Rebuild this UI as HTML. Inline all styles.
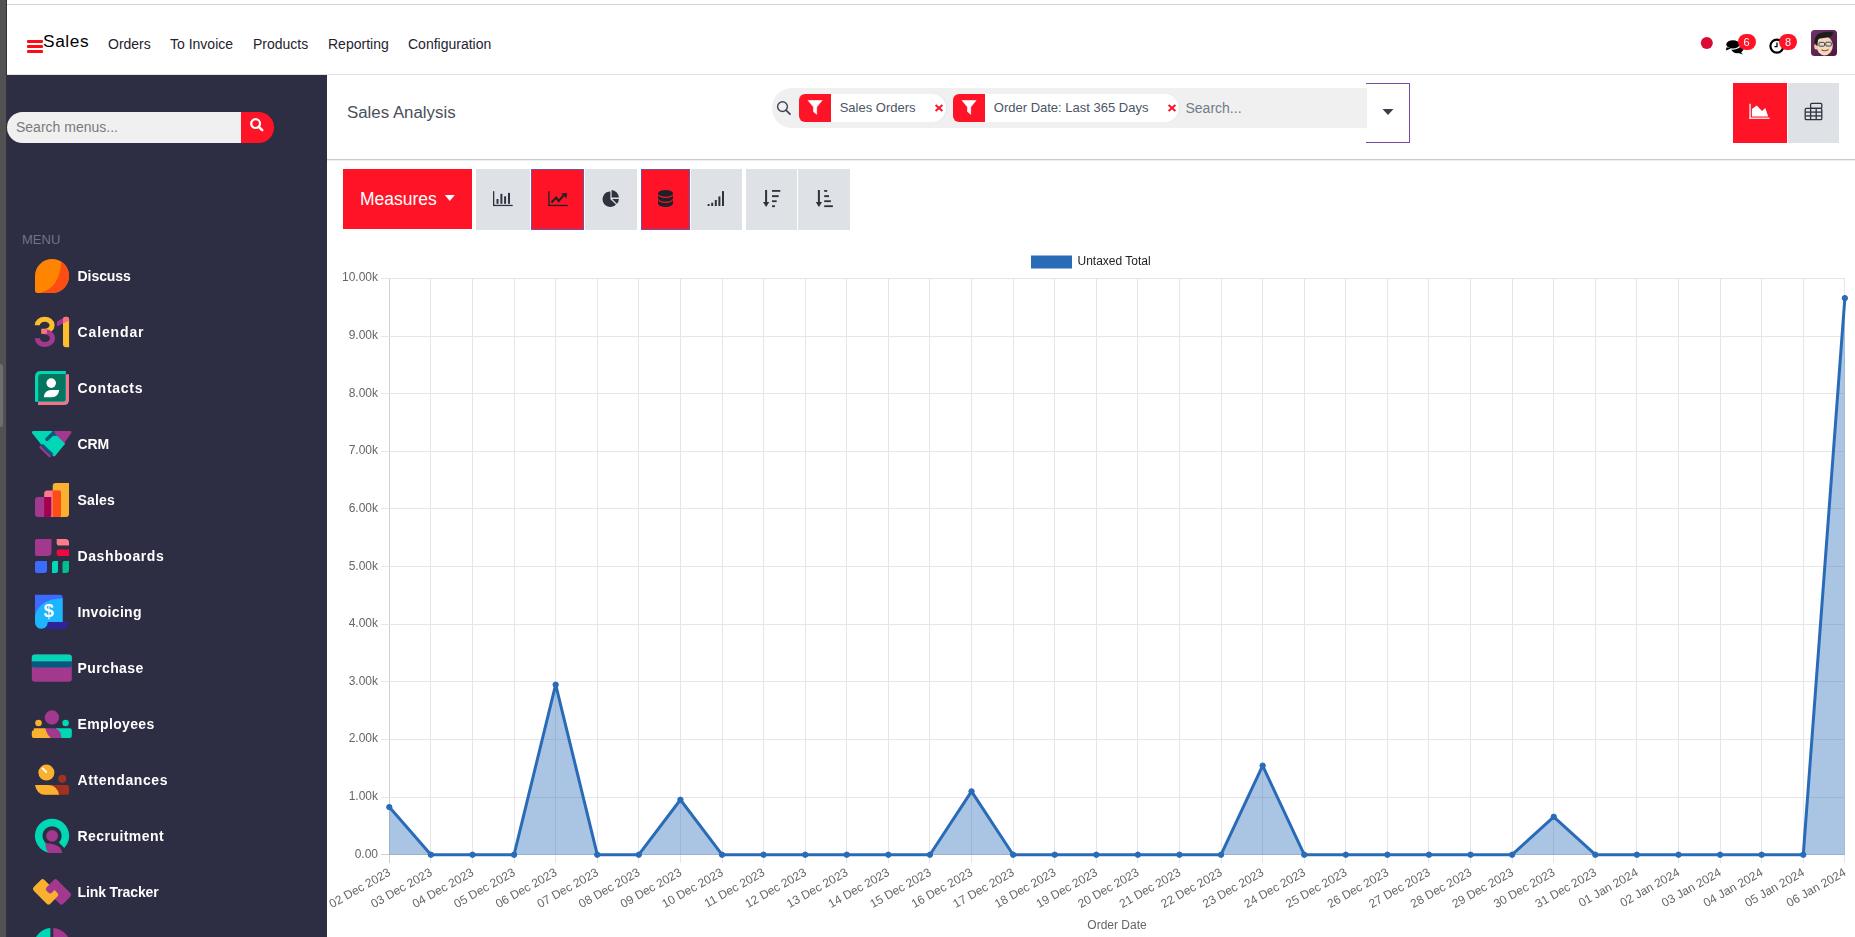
<!DOCTYPE html>
<html><head><meta charset="utf-8"><title>Sales Analysis</title>
<style>
*{box-sizing:border-box}
html,body{margin:0;padding:0;width:1855px;height:937px;overflow:hidden;background:#fff;font-family:"Liberation Sans",sans-serif;}
.a{position:absolute}
.chart{position:absolute;left:0;top:0;will-change:transform}
.nav a{position:absolute;top:35.6px;font-size:14px;color:#1f2330;text-decoration:none;line-height:16px;white-space:nowrap}
.a{white-space:nowrap}
.menu .it{position:absolute;left:77.5px;font-size:14px;font-weight:bold;color:#fff;line-height:16px}
.menu svg{position:absolute}
.btn{position:absolute;top:169px;height:61px;background:#dee1e6}
.btn.on{background:#fe1426;border:1px solid #6f54a3}
.btn svg{position:absolute;left:50%;top:50%;transform:translate(-50%,-50%)}
</style></head><body>
<!-- left strip -->
<div class="a" style="left:0;top:0;width:6px;height:937px;background:#525252"></div>
<div class="a" style="left:6px;top:0;width:1px;height:937px;background:#333"></div>
<div class="a" style="left:0;top:364px;width:3px;height:63px;background:#6e6e6e;border-radius:0 3px 3px 0"></div>
<div class="a" style="left:7px;top:4px;width:1848px;height:1px;background:#d0d4d4"></div>
<!-- navbar -->
<div class="a" style="left:7px;top:74px;width:1848px;height:1px;background:#dde3e6"></div>
<div class="a nav" style="left:0;top:0">
 <div class="a" style="left:27px;top:40px;width:16px;height:2.6px;background:#ff0a16;border-radius:1px"></div>
 <div class="a" style="left:27px;top:45.2px;width:16px;height:2.6px;background:#ff0a16;border-radius:1px"></div>
 <div class="a" style="left:27px;top:50.4px;width:16px;height:2.6px;background:#ff0a16;border-radius:1px"></div>
 <div class="a" style="left:43px;top:31px;font-size:17.3px;letter-spacing:0.6px;color:#000;line-height:20px">Sales</div>
 <a style="left:108px">Orders</a>
 <a style="left:170px">To Invoice</a>
 <a style="left:253px">Products</a>
 <a style="left:328px">Reporting</a>
 <a style="left:408px">Configuration</a>
</div>
<!-- sidebar -->
<div class="a" style="left:7px;top:75px;width:320px;height:862px;background:#2d2d43"></div>
<div class="a" style="left:7px;top:112px;width:234px;height:31px;background:#f0f0f0;border-radius:16px 0 0 16px"></div>
<div class="a" style="left:16px;top:119px;font-size:14px;color:#7a7a7a;line-height:16px">Search menus...</div>
<div class="a" style="left:241px;top:112px;width:33px;height:31px;background:#fe1426;border-radius:0 16px 16px 0"></div>
<div class="a" style="left:22px;top:232px;font-size:13px;color:#71718b;line-height:15px">MENU</div>
<!-- control panel -->
<div class="a" style="left:327px;top:159px;width:1528px;height:1px;background:#c9cacc"></div>
<div class="a" style="left:327px;top:160px;width:1528px;height:1px;background:#eceef2"></div>
<div class="a" style="left:347px;top:102.6px;font-size:16.85px;color:#4a4f5a;line-height:19px">Sales Analysis</div>
<div class="a" style="left:772px;top:88px;width:595px;height:40px;background:#f0f0f0;border-radius:20px 0 0 20px"></div>

<div class="a" style="left:799px;top:94px;width:147px;height:28px;background:#fff;border-radius:6px 14px 14px 6px;box-shadow:1px 0 0 #e3e6ea"></div>
<div class="a" style="left:799px;top:94px;width:32px;height:28px;background:#fe1426;border-radius:6px 0 0 6px"></div>
<div class="a" style="left:839.7px;top:100px;font-size:13px;color:#4c5566;line-height:15px">Sales Orders</div>
<div class="a" style="left:953px;top:94px;width:226px;height:28px;background:#fff;border-radius:6px 14px 14px 6px;box-shadow:1px 0 0 #e3e6ea"></div>
<div class="a" style="left:953px;top:94px;width:32px;height:28px;background:#fe1426;border-radius:6px 0 0 6px"></div>
<div class="a" style="left:993.8px;top:100px;font-size:13px;color:#4c5566;line-height:15px">Order Date: Last 365 Days</div>
<div class="a" style="left:1185.5px;top:99.5px;font-size:14px;color:#6f7b8b;line-height:16px">Search...</div>
<div class="a" style="left:1366px;top:83px;width:44px;height:60px;border:1px solid #714ca3;border-left:none"></div>
<div class="a" style="left:1733px;top:83px;width:54px;height:60px;background:#fe1426"></div>
<div class="a" style="left:1788px;top:83px;width:51px;height:60px;background:#dee1e6"></div>
<!-- buttons -->
<div class="a" style="left:343px;top:169px;width:129px;height:60px;background:#fe1426"></div>
<div class="a" style="left:360px;top:188.8px;font-size:17.5px;color:#fff;line-height:20px">Measures</div>
<div class="btn" style="left:476px;width:54px"></div>
<div class="btn on" style="left:531px;width:53px"></div>
<div class="btn" style="left:585px;width:52px"></div>
<div class="btn on" style="left:641px;width:49px"></div>
<div class="btn" style="left:691px;width:51px"></div>
<div class="btn" style="left:746px;width:51px"></div>
<div class="btn" style="left:798px;width:52px"></div>
<svg class="chart" width="1855" height="937" viewBox="0 0 1855 937" font-family="Liberation Sans, sans-serif"><line x1="389.5" y1="278.0" x2="389.5" y2="863.0" stroke="#cfcfcf" stroke-width="1"/><line x1="430.5" y1="278.0" x2="430.5" y2="863.0" stroke="#e6e6e6" stroke-width="1"/><line x1="472.5" y1="278.0" x2="472.5" y2="863.0" stroke="#e6e6e6" stroke-width="1"/><line x1="514.5" y1="278.0" x2="514.5" y2="863.0" stroke="#e6e6e6" stroke-width="1"/><line x1="555.5" y1="278.0" x2="555.5" y2="863.0" stroke="#e6e6e6" stroke-width="1"/><line x1="597.5" y1="278.0" x2="597.5" y2="863.0" stroke="#e6e6e6" stroke-width="1"/><line x1="638.5" y1="278.0" x2="638.5" y2="863.0" stroke="#e6e6e6" stroke-width="1"/><line x1="680.5" y1="278.0" x2="680.5" y2="863.0" stroke="#e6e6e6" stroke-width="1"/><line x1="722.5" y1="278.0" x2="722.5" y2="863.0" stroke="#e6e6e6" stroke-width="1"/><line x1="763.5" y1="278.0" x2="763.5" y2="863.0" stroke="#e6e6e6" stroke-width="1"/><line x1="805.5" y1="278.0" x2="805.5" y2="863.0" stroke="#e6e6e6" stroke-width="1"/><line x1="846.5" y1="278.0" x2="846.5" y2="863.0" stroke="#e6e6e6" stroke-width="1"/><line x1="888.5" y1="278.0" x2="888.5" y2="863.0" stroke="#e6e6e6" stroke-width="1"/><line x1="929.5" y1="278.0" x2="929.5" y2="863.0" stroke="#e6e6e6" stroke-width="1"/><line x1="971.5" y1="278.0" x2="971.5" y2="863.0" stroke="#e6e6e6" stroke-width="1"/><line x1="1013.5" y1="278.0" x2="1013.5" y2="863.0" stroke="#e6e6e6" stroke-width="1"/><line x1="1054.5" y1="278.0" x2="1054.5" y2="863.0" stroke="#e6e6e6" stroke-width="1"/><line x1="1096.5" y1="278.0" x2="1096.5" y2="863.0" stroke="#e6e6e6" stroke-width="1"/><line x1="1137.5" y1="278.0" x2="1137.5" y2="863.0" stroke="#e6e6e6" stroke-width="1"/><line x1="1179.5" y1="278.0" x2="1179.5" y2="863.0" stroke="#e6e6e6" stroke-width="1"/><line x1="1221.5" y1="278.0" x2="1221.5" y2="863.0" stroke="#e6e6e6" stroke-width="1"/><line x1="1262.5" y1="278.0" x2="1262.5" y2="863.0" stroke="#e6e6e6" stroke-width="1"/><line x1="1304.5" y1="278.0" x2="1304.5" y2="863.0" stroke="#e6e6e6" stroke-width="1"/><line x1="1345.5" y1="278.0" x2="1345.5" y2="863.0" stroke="#e6e6e6" stroke-width="1"/><line x1="1387.5" y1="278.0" x2="1387.5" y2="863.0" stroke="#e6e6e6" stroke-width="1"/><line x1="1428.5" y1="278.0" x2="1428.5" y2="863.0" stroke="#e6e6e6" stroke-width="1"/><line x1="1470.5" y1="278.0" x2="1470.5" y2="863.0" stroke="#e6e6e6" stroke-width="1"/><line x1="1512.5" y1="278.0" x2="1512.5" y2="863.0" stroke="#e6e6e6" stroke-width="1"/><line x1="1553.5" y1="278.0" x2="1553.5" y2="863.0" stroke="#e6e6e6" stroke-width="1"/><line x1="1595.5" y1="278.0" x2="1595.5" y2="863.0" stroke="#e6e6e6" stroke-width="1"/><line x1="1636.5" y1="278.0" x2="1636.5" y2="863.0" stroke="#e6e6e6" stroke-width="1"/><line x1="1678.5" y1="278.0" x2="1678.5" y2="863.0" stroke="#e6e6e6" stroke-width="1"/><line x1="1720.5" y1="278.0" x2="1720.5" y2="863.0" stroke="#e6e6e6" stroke-width="1"/><line x1="1761.5" y1="278.0" x2="1761.5" y2="863.0" stroke="#e6e6e6" stroke-width="1"/><line x1="1803.5" y1="278.0" x2="1803.5" y2="863.0" stroke="#e6e6e6" stroke-width="1"/><line x1="1844.5" y1="278.0" x2="1844.5" y2="863.0" stroke="#e6e6e6" stroke-width="1"/><line x1="381.0" y1="854.5" x2="1845.0" y2="854.5" stroke="#cfcfcf" stroke-width="1"/><line x1="381.0" y1="797.5" x2="1845.0" y2="797.5" stroke="#e6e6e6" stroke-width="1"/><line x1="381.0" y1="739.5" x2="1845.0" y2="739.5" stroke="#e6e6e6" stroke-width="1"/><line x1="381.0" y1="681.5" x2="1845.0" y2="681.5" stroke="#e6e6e6" stroke-width="1"/><line x1="381.0" y1="624.5" x2="1845.0" y2="624.5" stroke="#e6e6e6" stroke-width="1"/><line x1="381.0" y1="566.5" x2="1845.0" y2="566.5" stroke="#e6e6e6" stroke-width="1"/><line x1="381.0" y1="508.5" x2="1845.0" y2="508.5" stroke="#e6e6e6" stroke-width="1"/><line x1="381.0" y1="451.5" x2="1845.0" y2="451.5" stroke="#e6e6e6" stroke-width="1"/><line x1="381.0" y1="393.5" x2="1845.0" y2="393.5" stroke="#e6e6e6" stroke-width="1"/><line x1="381.0" y1="336.5" x2="1845.0" y2="336.5" stroke="#e6e6e6" stroke-width="1"/><line x1="381.0" y1="278.5" x2="1845.0" y2="278.5" stroke="#e6e6e6" stroke-width="1"/><path d="M389.31,854.7 L389.31,807.10 L430.90,854.70 L472.48,854.70 L514.07,854.70 L555.66,684.69 L597.25,854.70 L638.83,854.70 L680.42,799.78 L722.01,854.70 L763.59,854.70 L805.18,854.70 L846.77,854.70 L888.35,854.70 L929.94,854.70 L971.53,791.36 L1013.12,854.70 L1054.70,854.70 L1096.29,854.70 L1137.88,854.70 L1179.46,854.70 L1221.05,854.70 L1262.64,765.66 L1304.22,854.70 L1345.81,854.70 L1387.40,854.70 L1428.99,854.70 L1470.57,854.70 L1512.16,854.70 L1553.75,816.78 L1595.33,854.70 L1636.92,854.70 L1678.51,854.70 L1720.09,854.70 L1761.68,854.70 L1803.27,854.70 L1844.86,298.11 L1844.86,854.7 Z" fill="rgba(42,107,184,0.4)"/><polyline points="389.31,807.10 430.90,854.70 472.48,854.70 514.07,854.70 555.66,684.69 597.25,854.70 638.83,854.70 680.42,799.78 722.01,854.70 763.59,854.70 805.18,854.70 846.77,854.70 888.35,854.70 929.94,854.70 971.53,791.36 1013.12,854.70 1054.70,854.70 1096.29,854.70 1137.88,854.70 1179.46,854.70 1221.05,854.70 1262.64,765.66 1304.22,854.70 1345.81,854.70 1387.40,854.70 1428.99,854.70 1470.57,854.70 1512.16,854.70 1553.75,816.78 1595.33,854.70 1636.92,854.70 1678.51,854.70 1720.09,854.70 1761.68,854.70 1803.27,854.70 1844.86,298.11" fill="none" stroke="#2a6bb8" stroke-width="3" stroke-linejoin="round"/><circle cx="389.31" cy="807.10" r="2.7" fill="#2a6bb8" stroke="#2a6bb8" stroke-width="1"/><circle cx="430.90" cy="854.70" r="2.7" fill="#2a6bb8" stroke="#2a6bb8" stroke-width="1"/><circle cx="472.48" cy="854.70" r="2.7" fill="#2a6bb8" stroke="#2a6bb8" stroke-width="1"/><circle cx="514.07" cy="854.70" r="2.7" fill="#2a6bb8" stroke="#2a6bb8" stroke-width="1"/><circle cx="555.66" cy="684.69" r="2.7" fill="#2a6bb8" stroke="#2a6bb8" stroke-width="1"/><circle cx="597.25" cy="854.70" r="2.7" fill="#2a6bb8" stroke="#2a6bb8" stroke-width="1"/><circle cx="638.83" cy="854.70" r="2.7" fill="#2a6bb8" stroke="#2a6bb8" stroke-width="1"/><circle cx="680.42" cy="799.78" r="2.7" fill="#2a6bb8" stroke="#2a6bb8" stroke-width="1"/><circle cx="722.01" cy="854.70" r="2.7" fill="#2a6bb8" stroke="#2a6bb8" stroke-width="1"/><circle cx="763.59" cy="854.70" r="2.7" fill="#2a6bb8" stroke="#2a6bb8" stroke-width="1"/><circle cx="805.18" cy="854.70" r="2.7" fill="#2a6bb8" stroke="#2a6bb8" stroke-width="1"/><circle cx="846.77" cy="854.70" r="2.7" fill="#2a6bb8" stroke="#2a6bb8" stroke-width="1"/><circle cx="888.35" cy="854.70" r="2.7" fill="#2a6bb8" stroke="#2a6bb8" stroke-width="1"/><circle cx="929.94" cy="854.70" r="2.7" fill="#2a6bb8" stroke="#2a6bb8" stroke-width="1"/><circle cx="971.53" cy="791.36" r="2.7" fill="#2a6bb8" stroke="#2a6bb8" stroke-width="1"/><circle cx="1013.12" cy="854.70" r="2.7" fill="#2a6bb8" stroke="#2a6bb8" stroke-width="1"/><circle cx="1054.70" cy="854.70" r="2.7" fill="#2a6bb8" stroke="#2a6bb8" stroke-width="1"/><circle cx="1096.29" cy="854.70" r="2.7" fill="#2a6bb8" stroke="#2a6bb8" stroke-width="1"/><circle cx="1137.88" cy="854.70" r="2.7" fill="#2a6bb8" stroke="#2a6bb8" stroke-width="1"/><circle cx="1179.46" cy="854.70" r="2.7" fill="#2a6bb8" stroke="#2a6bb8" stroke-width="1"/><circle cx="1221.05" cy="854.70" r="2.7" fill="#2a6bb8" stroke="#2a6bb8" stroke-width="1"/><circle cx="1262.64" cy="765.66" r="2.7" fill="#2a6bb8" stroke="#2a6bb8" stroke-width="1"/><circle cx="1304.22" cy="854.70" r="2.7" fill="#2a6bb8" stroke="#2a6bb8" stroke-width="1"/><circle cx="1345.81" cy="854.70" r="2.7" fill="#2a6bb8" stroke="#2a6bb8" stroke-width="1"/><circle cx="1387.40" cy="854.70" r="2.7" fill="#2a6bb8" stroke="#2a6bb8" stroke-width="1"/><circle cx="1428.99" cy="854.70" r="2.7" fill="#2a6bb8" stroke="#2a6bb8" stroke-width="1"/><circle cx="1470.57" cy="854.70" r="2.7" fill="#2a6bb8" stroke="#2a6bb8" stroke-width="1"/><circle cx="1512.16" cy="854.70" r="2.7" fill="#2a6bb8" stroke="#2a6bb8" stroke-width="1"/><circle cx="1553.75" cy="816.78" r="2.7" fill="#2a6bb8" stroke="#2a6bb8" stroke-width="1"/><circle cx="1595.33" cy="854.70" r="2.7" fill="#2a6bb8" stroke="#2a6bb8" stroke-width="1"/><circle cx="1636.92" cy="854.70" r="2.7" fill="#2a6bb8" stroke="#2a6bb8" stroke-width="1"/><circle cx="1678.51" cy="854.70" r="2.7" fill="#2a6bb8" stroke="#2a6bb8" stroke-width="1"/><circle cx="1720.09" cy="854.70" r="2.7" fill="#2a6bb8" stroke="#2a6bb8" stroke-width="1"/><circle cx="1761.68" cy="854.70" r="2.7" fill="#2a6bb8" stroke="#2a6bb8" stroke-width="1"/><circle cx="1803.27" cy="854.70" r="2.7" fill="#2a6bb8" stroke="#2a6bb8" stroke-width="1"/><circle cx="1844.86" cy="298.11" r="2.7" fill="#2a6bb8" stroke="#2a6bb8" stroke-width="1"/><text x="378" y="854.70" dy="3.0" text-anchor="end" font-size="12" fill="#666">0.00</text><text x="378" y="797.07" dy="3.0" text-anchor="end" font-size="12" fill="#666">1.00k</text><text x="378" y="739.44" dy="3.0" text-anchor="end" font-size="12" fill="#666">2.00k</text><text x="378" y="681.81" dy="3.0" text-anchor="end" font-size="12" fill="#666">3.00k</text><text x="378" y="624.18" dy="3.0" text-anchor="end" font-size="12" fill="#666">4.00k</text><text x="378" y="566.55" dy="3.0" text-anchor="end" font-size="12" fill="#666">5.00k</text><text x="378" y="508.92" dy="3.0" text-anchor="end" font-size="12" fill="#666">6.00k</text><text x="378" y="451.29" dy="3.0" text-anchor="end" font-size="12" fill="#666">7.00k</text><text x="378" y="393.66" dy="3.0" text-anchor="end" font-size="12" fill="#666">8.00k</text><text x="378" y="336.03" dy="3.0" text-anchor="end" font-size="12" fill="#666">9.00k</text><text x="378" y="278.40" dy="3.0" text-anchor="end" font-size="12" fill="#666">10.00k</text><text transform="translate(385.78,864.90) rotate(-29.4)" x="0" y="7.2" dy="4.2" text-anchor="end" font-size="12" fill="#666">02 Dec 2023</text><text transform="translate(427.36,864.90) rotate(-29.4)" x="0" y="7.2" dy="4.2" text-anchor="end" font-size="12" fill="#666">03 Dec 2023</text><text transform="translate(468.95,864.90) rotate(-29.4)" x="0" y="7.2" dy="4.2" text-anchor="end" font-size="12" fill="#666">04 Dec 2023</text><text transform="translate(510.54,864.90) rotate(-29.4)" x="0" y="7.2" dy="4.2" text-anchor="end" font-size="12" fill="#666">05 Dec 2023</text><text transform="translate(552.12,864.90) rotate(-29.4)" x="0" y="7.2" dy="4.2" text-anchor="end" font-size="12" fill="#666">06 Dec 2023</text><text transform="translate(593.71,864.90) rotate(-29.4)" x="0" y="7.2" dy="4.2" text-anchor="end" font-size="12" fill="#666">07 Dec 2023</text><text transform="translate(635.30,864.90) rotate(-29.4)" x="0" y="7.2" dy="4.2" text-anchor="end" font-size="12" fill="#666">08 Dec 2023</text><text transform="translate(676.88,864.90) rotate(-29.4)" x="0" y="7.2" dy="4.2" text-anchor="end" font-size="12" fill="#666">09 Dec 2023</text><text transform="translate(718.47,864.90) rotate(-29.4)" x="0" y="7.2" dy="4.2" text-anchor="end" font-size="12" fill="#666">10 Dec 2023</text><text transform="translate(760.06,864.90) rotate(-29.4)" x="0" y="7.2" dy="4.2" text-anchor="end" font-size="12" fill="#666">11 Dec 2023</text><text transform="translate(801.65,864.90) rotate(-29.4)" x="0" y="7.2" dy="4.2" text-anchor="end" font-size="12" fill="#666">12 Dec 2023</text><text transform="translate(843.23,864.90) rotate(-29.4)" x="0" y="7.2" dy="4.2" text-anchor="end" font-size="12" fill="#666">13 Dec 2023</text><text transform="translate(884.82,864.90) rotate(-29.4)" x="0" y="7.2" dy="4.2" text-anchor="end" font-size="12" fill="#666">14 Dec 2023</text><text transform="translate(926.41,864.90) rotate(-29.4)" x="0" y="7.2" dy="4.2" text-anchor="end" font-size="12" fill="#666">15 Dec 2023</text><text transform="translate(967.99,864.90) rotate(-29.4)" x="0" y="7.2" dy="4.2" text-anchor="end" font-size="12" fill="#666">16 Dec 2023</text><text transform="translate(1009.58,864.90) rotate(-29.4)" x="0" y="7.2" dy="4.2" text-anchor="end" font-size="12" fill="#666">17 Dec 2023</text><text transform="translate(1051.17,864.90) rotate(-29.4)" x="0" y="7.2" dy="4.2" text-anchor="end" font-size="12" fill="#666">18 Dec 2023</text><text transform="translate(1092.75,864.90) rotate(-29.4)" x="0" y="7.2" dy="4.2" text-anchor="end" font-size="12" fill="#666">19 Dec 2023</text><text transform="translate(1134.34,864.90) rotate(-29.4)" x="0" y="7.2" dy="4.2" text-anchor="end" font-size="12" fill="#666">20 Dec 2023</text><text transform="translate(1175.93,864.90) rotate(-29.4)" x="0" y="7.2" dy="4.2" text-anchor="end" font-size="12" fill="#666">21 Dec 2023</text><text transform="translate(1217.52,864.90) rotate(-29.4)" x="0" y="7.2" dy="4.2" text-anchor="end" font-size="12" fill="#666">22 Dec 2023</text><text transform="translate(1259.10,864.90) rotate(-29.4)" x="0" y="7.2" dy="4.2" text-anchor="end" font-size="12" fill="#666">23 Dec 2023</text><text transform="translate(1300.69,864.90) rotate(-29.4)" x="0" y="7.2" dy="4.2" text-anchor="end" font-size="12" fill="#666">24 Dec 2023</text><text transform="translate(1342.28,864.90) rotate(-29.4)" x="0" y="7.2" dy="4.2" text-anchor="end" font-size="12" fill="#666">25 Dec 2023</text><text transform="translate(1383.86,864.90) rotate(-29.4)" x="0" y="7.2" dy="4.2" text-anchor="end" font-size="12" fill="#666">26 Dec 2023</text><text transform="translate(1425.45,864.90) rotate(-29.4)" x="0" y="7.2" dy="4.2" text-anchor="end" font-size="12" fill="#666">27 Dec 2023</text><text transform="translate(1467.04,864.90) rotate(-29.4)" x="0" y="7.2" dy="4.2" text-anchor="end" font-size="12" fill="#666">28 Dec 2023</text><text transform="translate(1508.62,864.90) rotate(-29.4)" x="0" y="7.2" dy="4.2" text-anchor="end" font-size="12" fill="#666">29 Dec 2023</text><text transform="translate(1550.21,864.90) rotate(-29.4)" x="0" y="7.2" dy="4.2" text-anchor="end" font-size="12" fill="#666">30 Dec 2023</text><text transform="translate(1591.80,864.90) rotate(-29.4)" x="0" y="7.2" dy="4.2" text-anchor="end" font-size="12" fill="#666">31 Dec 2023</text><text transform="translate(1633.39,864.90) rotate(-29.4)" x="0" y="7.2" dy="4.2" text-anchor="end" font-size="12" fill="#666">01 Jan 2024</text><text transform="translate(1674.97,864.90) rotate(-29.4)" x="0" y="7.2" dy="4.2" text-anchor="end" font-size="12" fill="#666">02 Jan 2024</text><text transform="translate(1716.56,864.90) rotate(-29.4)" x="0" y="7.2" dy="4.2" text-anchor="end" font-size="12" fill="#666">03 Jan 2024</text><text transform="translate(1758.15,864.90) rotate(-29.4)" x="0" y="7.2" dy="4.2" text-anchor="end" font-size="12" fill="#666">04 Jan 2024</text><text transform="translate(1799.73,864.90) rotate(-29.4)" x="0" y="7.2" dy="4.2" text-anchor="end" font-size="12" fill="#666">05 Jan 2024</text><text transform="translate(1841.32,864.90) rotate(-29.4)" x="0" y="7.2" dy="4.2" text-anchor="end" font-size="12" fill="#666">06 Jan 2024</text><text x="1117" y="928.8" text-anchor="middle" font-size="12" fill="#666">Order Date</text><rect x="1031.5" y="256" width="40" height="12" fill="#2a6bb8" stroke="#2a6bb8" stroke-width="1"/><text x="1077.5" y="264.8" font-size="12" fill="#222">Untaxed Total</text></svg>
<div class="menu"><svg class="a" style="left:0;top:0" width="327" height="937" viewBox="0 0 327 937"><g transform="translate(35,259)"><path d="M0,17 A17,17 0 0 1 34,17 A17,17 0 0 1 17,34 L2.5,34 Q0,34 0,31.5 Z" fill="#ff8400"/><path d="M26.2,2.6 A17,17 0 0 1 17,34 L5,34 Q25,29 26.2,2.6 Z" fill="#fc4d14"/></g><g transform="translate(35,315)"><path d="M2.3,10.25 A7.4,5.95 0 1 1 9.7,16.2 L6.45,16.2" fill="none" stroke="#fcbe2d" stroke-width="5.1"/><path d="M9.5,16.85 L9.9,16.85 A7.6,6.35 0 1 1 2.3,23.25" fill="none" stroke="#a2398f" stroke-width="5.1"/><path d="M8.5,14.3 L12.5,14.3 Q11,16.5 12.2,18.8 L8.5,18.8 Q6.45,18.8 6.45,16.55 Q6.45,14.3 8.5,14.3 Z" fill="#ff6e87"/><path d="M28,4.7 Q28,1.7 31,1.7 Q34.1,1.7 34.1,4.7 L34.1,32.2 L31,32.2 Q28,32.2 28,29.2 Z" fill="#fcbe2d"/><path d="M28,4.7 Q28,1.7 31,1.7 Q34.1,1.7 34.1,4.7 L34.1,5.8 L28,8.5 Z" fill="#ff6e87"/><path d="M22.9,6 L28,3.1 L28,8.45 L22.9,11.1 Q21.6,11.6 21.8,9.6 L22,7.2 Q22.1,6.4 22.9,6 Z" fill="#a2398f"/></g><g transform="translate(35,371)"><path d="M3,3.2 L34,3.2 L34,29 Q34,34 29,34 L3,34 Z" fill="#f5728a"/><path d="M0,5.6 Q0,-0.1 5.6,-0.1 L30.85,-0.1 L30.85,30.7 L0,30.7 Z" fill="#00d7b5"/><path d="M3.2,6.2 Q3.2,3.1 6.3,3.1 L30.6,3.1 L30.6,28.2 Q30.6,30.45 28.3,30.45 L3.2,30.45 Z" fill="#04755f"/><circle cx="16.2" cy="12.1" r="4.8" fill="#fff"/><path d="M8.8,26.3 Q9.4,19.3 16,19.1 L24.1,19.1 Q23.4,26.3 17,26.3 Z" fill="#fff"/></g><g transform="translate(35,427)"><path d="M-1,4 L35,4 Q37.5,4 36,6.5 L20.5,28.5 Q18.7,30.8 16.8,28.5 L-2.5,6.5 Q-4,4 -1,4 Z" fill="#a2398f"/><path d="M-1,4 L17.1,4 L30.2,16.8 L21,27.8 Q19.4,30 17.6,28.2 L6.3,17.8 L-2.5,6.5 Q-4,4 -1,4 Z" fill="#00d7b5"/><path d="M5.2,18.2 L16.2,29.2 Q15,31 13.4,29.6 L4.2,20.5 Z" fill="#a2398f"/><line x1="7.6" y1="18.6" x2="16.6" y2="27.2" stroke="#065a7d" stroke-width="3" stroke-linecap="round"/><line x1="12" y1="12.2" x2="18.4" y2="6" stroke="#065a7d" stroke-width="3.6" stroke-linecap="round"/><path d="M17.1,4 L22.2,9 L18.5,9 Z" fill="#065a7d"/></g><g transform="translate(35,483)"><path d="M17.7,3 Q17.7,0 20.7,0 L34,0 L34,31 Q34,34 31,34 L17.7,34 Z" fill="#fbb130"/><path d="M9.2,10.5 Q9.2,7.5 12.2,7.5 L26,7.5 L26,34 L9.2,34 Z" fill="#ff7a8a"/><path d="M17.7,7.5 L24,7.5 Q26,7.5 26,9.5 L26,32 Q26,34 24,34 L17.7,34 Z" fill="#fc4d14"/><path d="M0,17 Q0,14 3,14 L16.2,14 L16.2,34 L3,34 Q0,34 0,31 Z" fill="#a2398f"/><path d="M9.2,14 L16.2,14 L16.2,32 Q16.2,34 14.2,34 L9.2,34 Z" fill="#a3004f"/></g><g transform="translate(35,539)"><path d="M0,2 Q0,0 2,0 L16.5,0 L16.5,13 Q16.5,17 12.5,17 L2,17 Q0,17 0,15 Z" fill="#a2398f"/><path d="M21.7,0 L30.5,0 Q34,0 34,3.5 L34,6.5 L23.7,6.5 Q21.7,6.5 21.7,4.5 Z" fill="#ff7a8a"/><path d="M21.7,12.5 Q21.7,10.5 23.7,10.5 L34,10.5 L34,17 L23.7,17 Q21.7,17 21.7,15 Z" fill="#f5073e"/><path d="M0,24 Q0,22 2,22 L12,22 L12,31 Q12,34 9,34 L2,34 Q0,34 0,32 Z" fill="#3b6cff"/><path d="M19,22 L23,22 L23,32 Q23,34 21,34 L17,34 L17,24 Q17,22 19,22 Z" fill="#00d7b5"/><path d="M29.5,22 L34,22 L34,31 Q34,34 31,34 L27.5,34 L27.5,24 Q27.5,22 29.5,22 Z" fill="#00c08f"/></g><g transform="translate(35,595)"><path d="M0,-0.2 L24.6,-0.2 Q27.6,-0.2 27.6,2.8 L27.6,26.9 L0,26.9 Z" fill="#3b6cff"/><path d="M0,20 Q5,4 27.6,3.2 L27.6,26.9 L12.9,26.9 L12.9,27.4 A6.45,6.45 0 0 1 0,27.4 Z" fill="#1db5fd"/><path d="M12.9,26.9 L33.8,26.9 Q32.5,33.9 28,33.9 L6.45,33.9 A6.45,6.45 0 0 0 12.9,27.4 Z" fill="#2e2399"/><text x="13.9" y="22.3" text-anchor="middle" font-family="Liberation Sans" font-weight="bold" font-size="18.5" fill="#fff">$</text></g><g transform="translate(35,651)"><rect x="-3.2" y="3.4" width="40" height="27.3" rx="3" fill="#a2398f"/><path d="M-3.2,6.4 Q-3.2,3.4 -0.2,3.4 L33.8,3.4 Q36.8,3.4 36.8,6.4 L36.8,10.4 L-3.2,10.4 Z" fill="#00d7b5"/><path d="M-3.2,10.4 L36.8,10.4 L36.8,14.5 Q36.8,16.5 34.8,16.5 L-1.2,16.5 Q-3.2,16.5 -3.2,14.5 Z" fill="#065a7d"/></g><g transform="translate(35,707)"><circle cx="16.9" cy="10.5" r="7.2" fill="#a2398f"/><circle cx="3.5" cy="16" r="3.3" fill="#fbb130"/><circle cx="30.6" cy="16" r="3.3" fill="#00d7b5"/><path d="M-1.2,23.3 Q-3.2,23.3 -3.2,25.3 L-3.2,29 Q-3.2,31 -1.2,31 L16,31 Q12,25 10.5,21.3 L-1.2,21.3 Z" fill="#fbb130"/><path d="M21,21.3 L34.8,21.3 Q36.8,21.3 36.8,23.3 L36.8,29 Q36.8,31 34.8,31 L20.5,31 Z" fill="#00d7b5"/><path d="M10.5,21.3 L20,21.3 Q26,23 26.5,31 L16,31 Q11.5,27.5 10.5,21.3 Z" fill="#a2398f"/></g><g transform="translate(35,763)"><circle cx="11.4" cy="9.6" r="8" fill="#fbb130"/><line x1="7.6" y1="5.4" x2="11.2" y2="9" stroke="#fff" stroke-width="1.8" stroke-linecap="round"/><circle cx="27.3" cy="15.7" r="4" fill="#a3311f"/><path d="M0,22 L32,22 Q34,22 34,24 L34,30 Q34,31.8 32,31.8 L10,31.8 Q2,31.8 0,22 Z" fill="#a3311f"/><path d="M0,22 L13,22 Q22,22 24,31.8 L10,31.8 Q2,31.8 0,22 Z" fill="#fbb130"/></g><g transform="translate(35,819)"><circle cx="17.05" cy="16.85" r="13.4" fill="none" stroke="#00d7b5" stroke-width="7.5"/><path d="M17.05,16.85 L40,39.8 L17.05,45 Z" fill="#2d2d43"/><circle cx="17.1" cy="16.8" r="5.9" fill="#a2398f"/><path d="M10.4,24.2 Q20.5,24.4 24.8,28.4 Q27.3,30.8 27.3,34.1 L13.6,34.1 Q10.4,30.5 10.4,24.2 Z" fill="#a2398f"/></g><g transform="translate(35,875)"><g transform="translate(23.5,17) rotate(45)"><rect x="-11.75" y="-7.6" width="23.5" height="15.2" rx="2.6" fill="#a2398f"/></g><g transform="translate(10.6,16.8) rotate(45)"><rect x="-11.75" y="-7.6" width="23.5" height="15.2" rx="2.6" fill="#fbb130"/></g><g transform="translate(23.5,17) rotate(45)"><rect x="-11.75" y="-7.6" width="7.6" height="15.2" rx="2.6" fill="#a2398f"/></g></g><g transform="translate(35,931)"><path d="M15.4,-3.03 L15.4,15.4 L-1.5,15.4 A18.5,18.5 0 0 1 15.4,-3.03 Z" fill="#00d7b5"/><path d="M18.3,-3.05 A18.5,18.5 0 0 1 35.5,15.4 L18.3,15.4 Z" fill="#a2398f"/></g></svg><div class="it" style="top:267.8px;letter-spacing:-0.050px">Discuss</div><div class="it" style="top:323.8px;letter-spacing:0.871px">Calendar</div><div class="it" style="top:379.8px;letter-spacing:0.729px">Contacts</div><div class="it" style="top:435.8px;letter-spacing:-0.050px">CRM</div><div class="it" style="top:491.8px;letter-spacing:0.175px">Sales</div><div class="it" style="top:547.8px;letter-spacing:0.600px">Dashboards</div><div class="it" style="top:603.8px;letter-spacing:0.325px">Invoicing</div><div class="it" style="top:659.8px;letter-spacing:0.386px">Purchase</div><div class="it" style="top:715.8px;letter-spacing:0.350px">Employees</div><div class="it" style="top:771.8px;letter-spacing:0.600px">Attendances</div><div class="it" style="top:827.8px;letter-spacing:0.440px">Recruitment</div><div class="it" style="top:883.8px;letter-spacing:-0.118px">Link Tracker</div></div>
<svg class="a" style="left:490px;top:188px;" width="26" height="22" viewBox="0 0 26 22"><g fill="#2f333d"><rect x="3" y="3.2" width="1.3" height="14.8"/><rect x="3" y="16.8" width="19.7" height="1.3"/><rect x="6.5" y="11" width="2" height="4.8"/><rect x="10.4" y="5.8" width="2" height="10"/><rect x="14.1" y="8.3" width="2" height="7.5"/><rect x="18" y="4.9" width="2" height="10.9"/></g></svg><svg class="a" style="left:545px;top:188px;" width="26" height="22" viewBox="0 0 26 22"><g fill="#1e2228"><rect x="3.3" y="3.2" width="1.3" height="14.8"/><rect x="3.3" y="16.8" width="19.6" height="1.3"/></g><polyline points="6.4,14.6 11.2,9.6 13.7,13 18.3,7.6" fill="none" stroke="#1e2228" stroke-width="2.1" stroke-linejoin="miter"/><polygon points="16.3,5.6 22,5 21.4,10.6" fill="#1e2228"/></svg><svg class="a" style="left:599.7px;top:188px;" width="22" height="22" viewBox="0 0 22 22"><g fill="#2f333d"><path d="M10.4,11.2 L10.4,3.4 A7.8,7.8 0 1 0 16.0,16.6 Z"/><path d="M11.6,2.1 A7.8,7.8 0 0 1 18.9,9.6 L11.6,9.6 Z"/><path d="M12.2,11 L18.9,11 A7.8,7.8 0 0 1 16.9,15.8 Z"/></g></svg><svg class="a" style="left:654px;top:186px;" width="22" height="24" viewBox="0 0 22 24"><g fill="#1e2228"><ellipse cx="11.5" cy="7.4" rx="7.5" ry="3.4"/><path d="M4,8.7 A7.5,3.4 0 0 0 19,8.7 L19,12.3 A7.5,3.4 0 0 1 4,12.3 Z"/><path d="M4,13.6 A7.5,3.4 0 0 0 19,13.6 L19,17.6 A7.5,3.4 0 0 1 4,17.6 Z"/></g></svg><svg class="a" style="left:704px;top:188px;" width="24" height="20" viewBox="0 0 24 20"><g fill="#2f333d"><rect x="3.6" y="16" width="2" height="2"/><rect x="7.2" y="14.7" width="2" height="3.3"/><rect x="10.8" y="12" width="2" height="6"/><rect x="14.4" y="8.4" width="2" height="9.6"/><rect x="18" y="3.1" width="2" height="14.9"/></g></svg><svg class="a" style="left:760px;top:187px;" width="24" height="22" viewBox="0 0 24 22"><g fill="#2f333d"><rect x="5.1" y="3" width="2" height="14"/><polygon points="3,15 9.3,15 6.1,20"/><rect x="12" y="3" width="8.3" height="1.8"/><rect x="12" y="8.2" width="6.7" height="1.9"/><rect x="12" y="13.3" width="4.7" height="1.8"/><rect x="12" y="18.3" width="3" height="1.8"/></g></svg><svg class="a" style="left:812px;top:187px;" width="24" height="22" viewBox="0 0 24 22"><g fill="#2f333d"><rect x="5.9" y="3" width="2" height="14"/><polygon points="3.8,15 10.1,15 6.9,20"/><rect x="12.2" y="3" width="3" height="1.8"/><rect x="12.2" y="8.2" width="4.8" height="1.9"/><rect x="12.2" y="13.3" width="6.7" height="1.8"/><rect x="12.2" y="18.3" width="8.7" height="1.8"/></g></svg><svg class="a" style="left:444px;top:194px;" width="12" height="8" viewBox="0 0 12 8"><polygon points="0.8,1 10.8,1 5.8,7" fill="#fff"/></svg><svg class="a" style="left:1747px;top:101px;" width="26" height="22" viewBox="0 0 26 22"><g fill="#fff"><rect x="2.4" y="2.8" width="1.3" height="15" /><rect x="2.4" y="16.6" width="20.2" height="1.2"/><path d="M4.9,15.6 L4.9,8.1 L9.7,4.5 L15,9.9 L18.3,7.1 L21.2,15.6 Z"/></g></svg><svg class="a" style="left:1802px;top:100px;" width="24" height="24" viewBox="0 0 24 24"><g fill="none" stroke="#2f333d" stroke-width="1.3"><rect x="3.2" y="8.4" width="16.6" height="11.2" rx="1.2"/><rect x="8.6" y="3.4" width="11.2" height="5" rx="1.2"/><line x1="3.2" y1="12.1" x2="19.8" y2="12.1"/><line x1="3.2" y1="15.9" x2="19.8" y2="15.9"/><line x1="8.6" y1="8.4" x2="8.6" y2="19.6"/><line x1="14.2" y1="8.4" x2="14.2" y2="19.6"/></g></svg><svg class="a" style="left:774px;top:98px;" width="20" height="20" viewBox="0 0 20 20"><circle cx="8.5" cy="8.6" r="4.9" fill="none" stroke="#3f4552" stroke-width="1.4"/><line x1="12" y1="12.1" x2="16" y2="16.1" stroke="#3f4552" stroke-width="1.7" stroke-linecap="round"/></svg><svg class="a" style="left:807px;top:99px;" width="16" height="16" viewBox="0 0 16 16"><path d="M1.1,1.5 L15.1,1.5 L9.7,8 L9.7,15.3 L6.5,12.8 L6.5,8 Z" fill="#fff" stroke="#fff" stroke-width="0.6" stroke-linejoin="round"/></svg><svg class="a" style="left:961px;top:99px;" width="16" height="16" viewBox="0 0 16 16"><path d="M1.1,1.5 L15.1,1.5 L9.7,8 L9.7,15.3 L6.5,12.8 L6.5,8 Z" fill="#fff" stroke="#fff" stroke-width="0.6" stroke-linejoin="round"/></svg><svg class="a" style="left:933px;top:101px;" width="12" height="12" viewBox="0 0 12 12"><path d="M2.6,3.9 L9.4,10.1 M9.4,3.9 L2.6,10.1" stroke="#fe1426" stroke-width="2" stroke-linecap="butt"/></svg><svg class="a" style="left:1166px;top:101px;" width="12" height="12" viewBox="0 0 12 12"><path d="M2.6,3.9 L9.4,10.1 M9.4,3.9 L2.6,10.1" stroke="#fe1426" stroke-width="2" stroke-linecap="butt"/></svg><svg class="a" style="left:1380px;top:106px;" width="16" height="12" viewBox="0 0 16 12"><polygon points="2.5,3 13.5,3 8,9" fill="#3a3f48"/></svg><svg class="a" style="left:248px;top:116px;" width="18" height="18" viewBox="0 0 18 18"><circle cx="7.6" cy="7.6" r="4.4" fill="none" stroke="#fff" stroke-width="2.2"/><line x1="10.8" y1="10.8" x2="14.2" y2="14.2" stroke="#fff" stroke-width="2.6" stroke-linecap="round"/></svg><svg class="a" style="left:1700px;top:37px;" width="14" height="14" viewBox="0 0 14 14"><circle cx="6.8" cy="6" r="6" fill="#d90b35"/></svg><svg class="a" style="left:1724px;top:38px;" width="22" height="18" viewBox="0 0 22 18"><g fill="#000"><ellipse cx="13.4" cy="11" rx="6" ry="4.2"/><polygon points="16,13 18.9,16.6 13.2,14.6"/><ellipse cx="8.9" cy="6.4" rx="7.3" ry="4.7" stroke="#fff" stroke-width="1.3"/><polygon points="2.6,9.2 1.8,12.4 7,10.6"/></g></svg><svg class="a" style="left:1767px;top:36px;" width="20" height="20" viewBox="0 0 20 20"><circle cx="9.9" cy="10.1" r="6.5" fill="none" stroke="#000" stroke-width="2.2"/><path d="M10,6.5 L10,10.6 L7.5,10.6" fill="none" stroke="#000" stroke-width="1.3"/></svg><div class="a" style="left:1737.5px;top:34px;width:18px;height:16px;border-radius:8px;background:#fe1426;color:#fff;font-size:11px;line-height:16px;text-align:center">6</div><div class="a" style="left:1779px;top:34px;width:18px;height:16px;border-radius:8px;background:#fe1426;color:#fff;font-size:11px;line-height:16px;text-align:center">8</div><svg class="a" style="left:1811px;top:30px;" width="26" height="26" viewBox="0 0 26 26"><defs><linearGradient id="avg" x1="0" y1="0" x2="1" y2="1"><stop offset="0" stop-color="#6e3468"/><stop offset="1" stop-color="#4d1640"/></linearGradient></defs><rect x="0" y="0" width="26" height="26" rx="3.5" fill="url(#avg)"/><ellipse cx="13.6" cy="15.8" rx="8.2" ry="9.6" fill="#f6d8b8"/><ellipse cx="5.2" cy="16.6" rx="2" ry="3" fill="#f0cba8"/><path d="M3.4,12 Q3.6,3.5 11.5,2.4 Q19.5,1.2 22.4,2.4 Q21.5,5.5 19.5,7 Q12,8.2 7.2,8.8 Q6.6,12 6.5,16 Q4,15 3.4,12 Z" fill="#1d1d1d"/><rect x="8" y="12.4" width="5.5" height="3.8" rx="0.8" fill="#ddd" stroke="#333" stroke-width="0.9"/><rect x="14.8" y="12.2" width="5.5" height="3.8" rx="0.8" fill="#ddd" stroke="#333" stroke-width="0.9"/><path d="M10.5,19.8 Q14,22 17.6,19.4" fill="none" stroke="#8b4a4a" stroke-width="1.1"/></svg>
</body></html>
